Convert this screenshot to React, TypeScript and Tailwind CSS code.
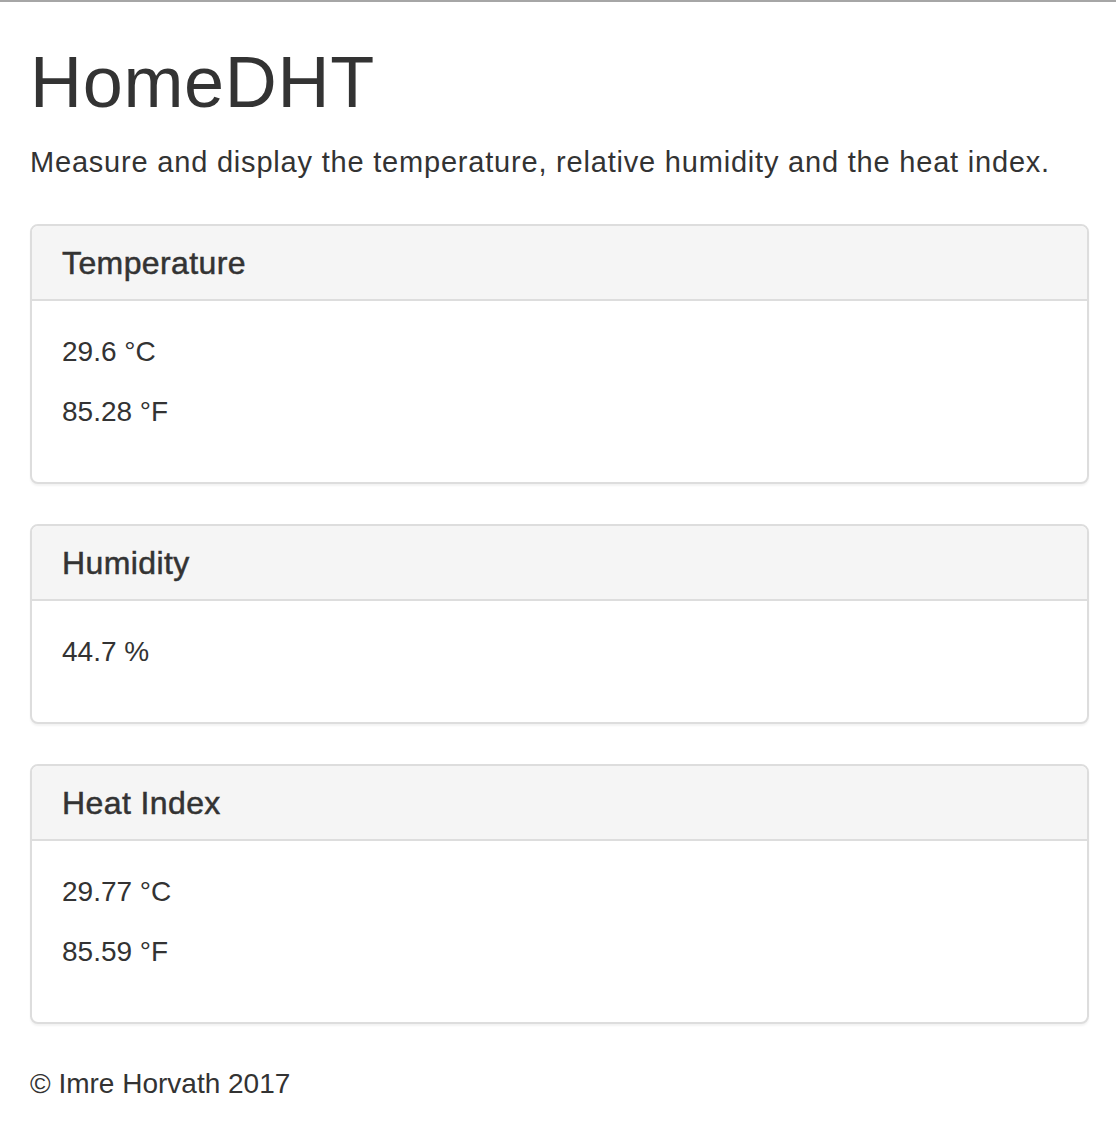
import React from 'react';

interface PanelProps {
  title: string;
  values: string[];
}

const Panel: React.FC<PanelProps> = ({ title, values }) => (
  <div className="mb-10 rounded-lg border-2 border-[#dddddd] bg-white shadow-[0_2px_2px_rgba(0,0,0,0.05)]">
    <div className="rounded-t-md border-b-2 border-[#dddddd] bg-[#f5f5f5] px-[30px] pt-5 pb-[18px]">
      <h3 className="text-[32px] leading-[35px] tracking-[0.4px] [-webkit-text-stroke:0.5px_#333333]">{title}</h3>
    </div>
    <div className="px-[30px] pt-[31px] pb-[30px]">
      {values.map(v => (
        <p key={v} className="mb-5 text-[28px] leading-10">{v}</p>
      ))}
    </div>
  </div>
);

const App: React.FC = () => {
  return (
    <div className="min-h-screen border-t-2 border-[#a6a6a6] bg-white font-['Liberation_Sans',Arial,sans-serif] text-[#333333]">
      <div className="pl-[30px] pr-[27px]">
        <h1 className="mt-[41px] mb-5 text-[72px] leading-[79px] tracking-[0.7px]">HomeDHT</h1>
        <p className="mb-[42px] text-[29px] leading-10 tracking-[0.8px]">
          Measure and display the temperature, relative humidity and the heat index.
        </p>
        <Panel title="Temperature" values={['29.6 °C', '85.28 °F']} />
        <Panel title="Humidity" values={['44.7 %']} />
        <Panel title="Heat Index" values={['29.77 °C', '85.59 °F']} />
        <footer className="mt-[2px] text-[28px] leading-10">© Imre Horvath 2017</footer>
      </div>
    </div>
  );
};

export default App;
